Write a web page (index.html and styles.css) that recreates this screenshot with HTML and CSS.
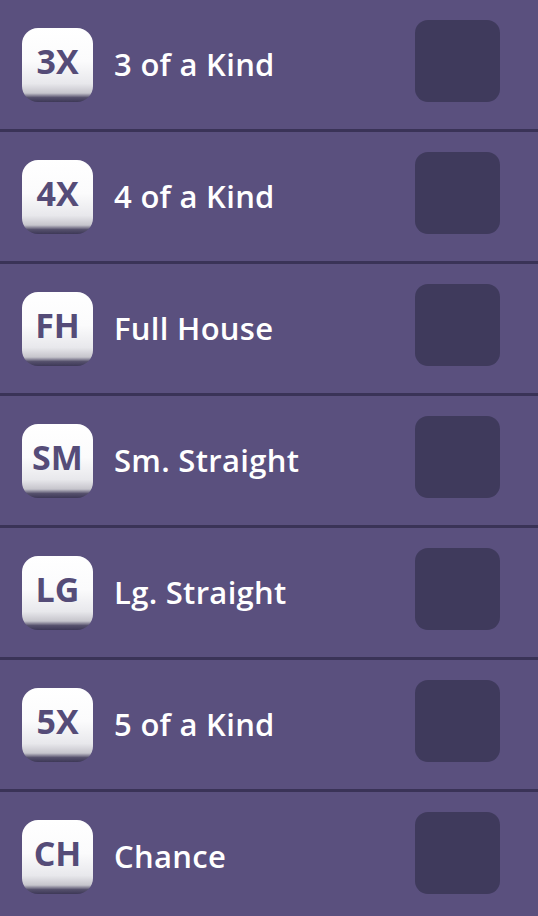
FILE: index.html
```html
<!DOCTYPE html>
<html lang="en">
<head>
  <meta charset="UTF-8">
  <meta name="viewport" content="width=device-width, initial-scale=1.0">
  <title>Lower Section</title>
  <link rel="stylesheet" href="styles.css">
</head>
<body>
  <div class="score-list">
    <div class="score-row">
      <div class="badge">3X</div>
      <div class="label">3 of a Kind</div>
      <div class="slot"></div>
    </div>
    <div class="score-row">
      <div class="badge">4X</div>
      <div class="label">4 of a Kind</div>
      <div class="slot"></div>
    </div>
    <div class="score-row">
      <div class="badge">FH</div>
      <div class="label">Full House</div>
      <div class="slot"></div>
    </div>
    <div class="score-row">
      <div class="badge">SM</div>
      <div class="label">Sm. Straight</div>
      <div class="slot"></div>
    </div>
    <div class="score-row">
      <div class="badge">LG</div>
      <div class="label">Lg. Straight</div>
      <div class="slot"></div>
    </div>
    <div class="score-row">
      <div class="badge">5X</div>
      <div class="label">5 of a Kind</div>
      <div class="slot"></div>
    </div>
    <div class="score-row">
      <div class="badge">CH</div>
      <div class="label">Chance</div>
      <div class="slot"></div>
    </div>
  </div>
</body>
</html>
```

FILE: styles.css
```css
body {
  margin: 0;
  padding: 0;
  background-color: #5a507e;
  font-family: "Open Sans", "Noto Sans", sans-serif;
  overflow: hidden;
}
.score-list {
  display: flex;
  flex-direction: column;
}
.score-row {
  display: flex;
  align-items: center;
  height: 129px;
  border-bottom: 3px solid #3a3357;
  padding-left: 22px;
  padding-right: 38px;
}
.badge {
  width: 71px;
  height: 74px;
  box-sizing: border-box;
  border-radius: 16px;
  background: linear-gradient(to bottom, #ffffff 0%, #fbfbfc 45%, #e8e8ec 75%, #c6c5cc 88%, #55506c 94%, #3d3857 100%);
  color: #554c78;
  font-size: 34px;
  font-weight: 700;
  display: flex;
  align-items: center;
  justify-content: center;
  padding-bottom: 8px;
  margin-top: 1px;
}
.label {
  flex: 1;
  margin-left: 21px;
  color: #ffffff;
  font-size: 31px;
  font-weight: 600;
  letter-spacing: 0.3px;
  margin-bottom: 2px;
}
.slot {
  width: 85px;
  height: 82px;
  border-radius: 13px;
  background-color: #3f3a5c;
  margin-bottom: 8px;
}
```
